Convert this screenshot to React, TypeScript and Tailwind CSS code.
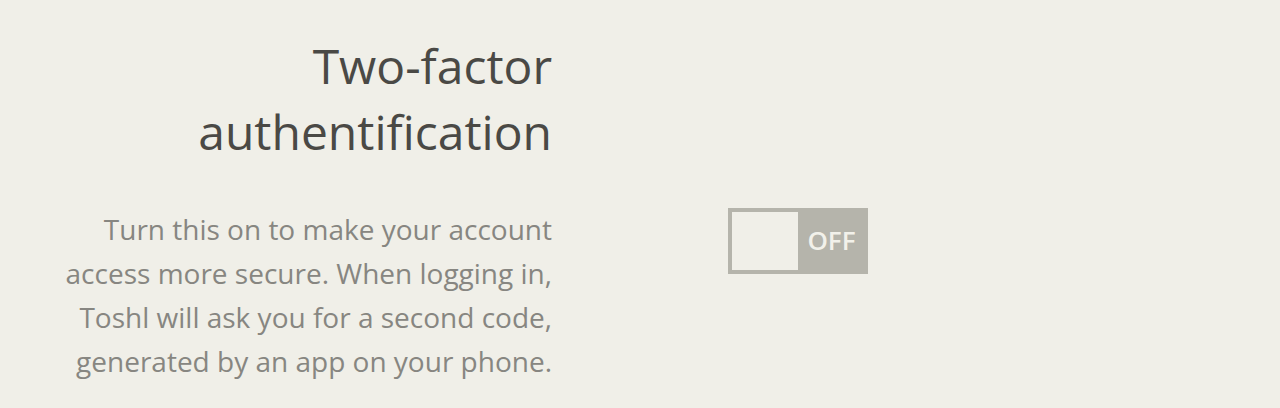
import React from "react";

export default function App() {
  return (
    <div className="w-[1280px] h-[408px] bg-[#f0efe8] overflow-hidden" style={{ fontFamily: '"Open Sans", sans-serif' }}>
      <div className="flex pt-[33px]">
        <div className="w-[552px] text-right">
          <h1 className="text-[48px] leading-[66px] text-[#4a4945] font-normal">
            Two-factor
            <br />
            authentification
          </h1>
          <p className="mt-[42px] text-[28px] leading-[44px] text-[#878681]">
            Turn this on to make your account
            <br />
            access more secure. When logging in,
            <br />
            Toshl will ask you for a second code,
            <br />
            generated by an app on your phone.
          </p>
        </div>
        <div className="ml-[176px] pt-[175px]">
          <div className="flex w-[140px] h-[66px] bg-[#b5b4ab] p-[4px]">
            <div className="w-[66px] h-[58px] bg-[#f0efe8]" />
            <div className="flex-1 flex items-center justify-center pb-[1px] pl-[1px] text-[26px] font-semibold text-[#f2f1ea]">
              OFF
            </div>
          </div>
        </div>
      </div>
    </div>
  );
}
